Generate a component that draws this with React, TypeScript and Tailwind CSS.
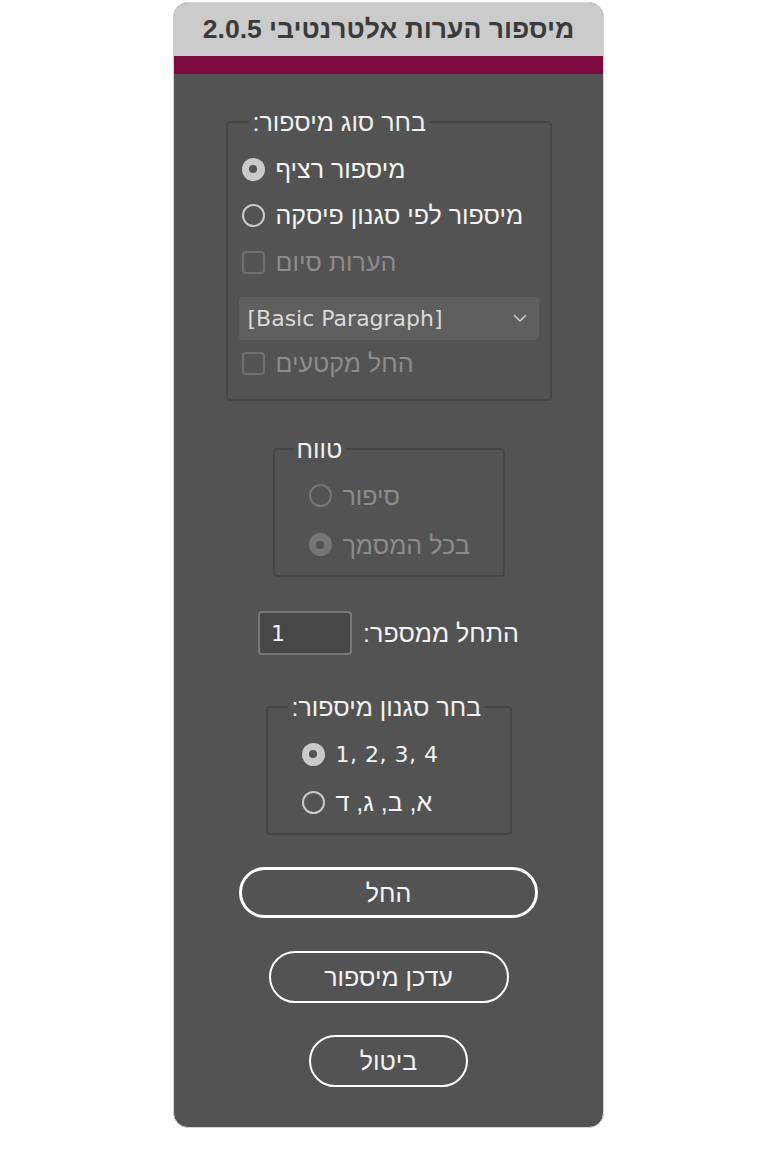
import React from "react";

const heb = { fontFamily: '"Liberation Sans", "DejaVu Sans", sans-serif' };
const lat = { fontFamily: '"DejaVu Sans", "Liberation Sans", sans-serif' };

function Radio({ checked, disabled }: { checked?: boolean; disabled?: boolean }) {
  const c = disabled ? "#767676" : "#cacaca";
  if (checked) {
    return (
      <span
        className="w-[23px] h-[23px] rounded-full flex items-center justify-center shrink-0"
        style={{ background: c }}
      >
        <span className="w-[8px] h-[8px] rounded-full bg-[#535353]" />
      </span>
    );
  }
  return (
    <span
      className="w-[23px] h-[23px] rounded-full border-2 shrink-0"
      style={{ borderColor: c }}
    />
  );
}

function Check() {
  return <span className="w-[23px] h-[23px] rounded-[4px] border-2 border-[#6f6f6f] shrink-0" />;
}

function Row({
  children,
  h,
  pl,
}: {
  children: React.ReactNode;
  h: string;
  pl: string;
}) {
  return <div className={`flex items-center gap-[11px] ${h} ${pl}`}>{children}</div>;
}

function T({ children, dim }: { children: React.ReactNode; dim?: boolean }) {
  return (
    <span dir="rtl" style={heb} className={`text-[25px] leading-[28px] ${dim ? "text-[#8c8c8c]" : "text-[#f4f4f4]"}`}>
      {children}
    </span>
  );
}

export default function App() {
  return (
    <div className="min-h-[1168px] bg-white flex justify-center pt-[2px] pr-[2px]" style={heb}>
      <div className="w-[431px] h-[1126px] rounded-[15px] overflow-hidden bg-[#535353] flex flex-col border border-[#d4d4d4]">
        <div className="h-[53px] bg-[#cbcbcb] flex items-center justify-center">
          <span dir="rtl" className="text-[26.5px] font-bold text-[#3b3b3b]">
            מיספור הערות אלטרנטיבי 2.0.5
          </span>
        </div>
        <div className="h-[18px] bg-[#7c0a3e]" />

        <div className="flex flex-col items-center">
          {/* fieldset 1 */}
          <fieldset dir="ltr" className="mt-[36px] w-[326px] border-2 border-[#464646] rounded-[4px] px-[11px] pt-[12px] pb-[13px]">
            <legend dir="rtl" className="ml-[10px] px-[4px] text-[25px] leading-[24px] text-[#f0f0f0]">
              בחר סוג מיספור:
            </legend>
            <Row h="h-[46px]" pl="pl-[3px]">
              <Radio checked />
              <T>מיספור רציף</T>
            </Row>
            <Row h="h-[46px]" pl="pl-[3px]">
              <Radio />
              <T>מיספור לפי סגנון פיסקה</T>
            </Row>
            <Row h="h-[48px]" pl="pl-[3px]">
              <Check />
              <T dim>הערות סיום</T>
            </Row>
            <div className="mt-[11px] h-[43px] rounded-[4px] bg-[#5f5f5f] flex items-center justify-between pl-[9px] pr-[12px]">
              <span style={lat} className="text-[22px] text-[#dadada]">[Basic Paragraph]</span>
              <svg width="14" height="9" viewBox="0 0 14 9" fill="none">
                <path d="M1.5 1.5 L7 7 L12.5 1.5" stroke="#cfcfcf" strokeWidth="1.6" strokeLinecap="round" strokeLinejoin="round" />
              </svg>
            </div>
            <Row h="h-[46px]" pl="pl-[3px]">
              <Check />
              <T dim>החל מקטעים</T>
            </Row>
          </fieldset>

          {/* fieldset 2 */}
          <fieldset dir="ltr" className="mt-[36px] w-[232px] border-2 border-[#464646] rounded-[4px] pt-[10px] pb-[6px]">
            <legend dir="rtl" className="ml-[18px] px-[4px] text-[25px] leading-[24px] text-[#f0f0f0]">
              טווח
            </legend>
            <Row h="h-[49px]" pl="pl-[34px]">
              <Radio disabled />
              <T dim>סיפור</T>
            </Row>
            <Row h="h-[49px]" pl="pl-[34px]">
              <Radio checked disabled />
              <T dim>בכל המסמך</T>
            </Row>
          </fieldset>

          {/* start number */}
          <div className="mt-[34px] flex items-center gap-[11px]">
            <div className="w-[94px] h-[44px] rounded-[4px] bg-[#474747] border-2 border-[#777777] flex items-center pl-[11px]">
              <span style={lat} className="text-[22px] text-[#f4f4f4]">1</span>
            </div>
            <T>התחל ממספר:</T>
          </div>

          {/* fieldset 3 */}
          <fieldset dir="ltr" className="mt-[40px] w-[246px] border-2 border-[#464646] rounded-[4px] pt-[11px] pb-[7px]">
            <legend dir="rtl" className="ml-[20px] px-[4px] text-[25px] leading-[24px] text-[#f0f0f0]">
              בחר סגנון מיספור:
            </legend>
            <Row h="h-[48px]" pl="pl-[34px]">
              <Radio checked />
              <span style={lat} className="text-[22px] text-[#f4f4f4] tracking-[0.5px]">1, 2, 3, 4</span>
            </Row>
            <Row h="h-[48px]" pl="pl-[34px]">
              <Radio />
              <T>א, ב, ג, ד</T>
            </Row>
          </fieldset>

          {/* buttons */}
          <button className="mt-[32px] w-[299px] h-[51px] rounded-full border-[3px] border-white flex items-center justify-center">
            <T>החל</T>
          </button>
          <button className="mt-[33px] w-[240px] h-[52px] rounded-full border-2 border-white flex items-center justify-center">
            <T>עדכן מיספור</T>
          </button>
          <button className="mt-[32px] w-[159px] h-[52px] rounded-full border-2 border-white flex items-center justify-center">
            <T>ביטול</T>
          </button>
        </div>
      </div>
    </div>
  );
}
